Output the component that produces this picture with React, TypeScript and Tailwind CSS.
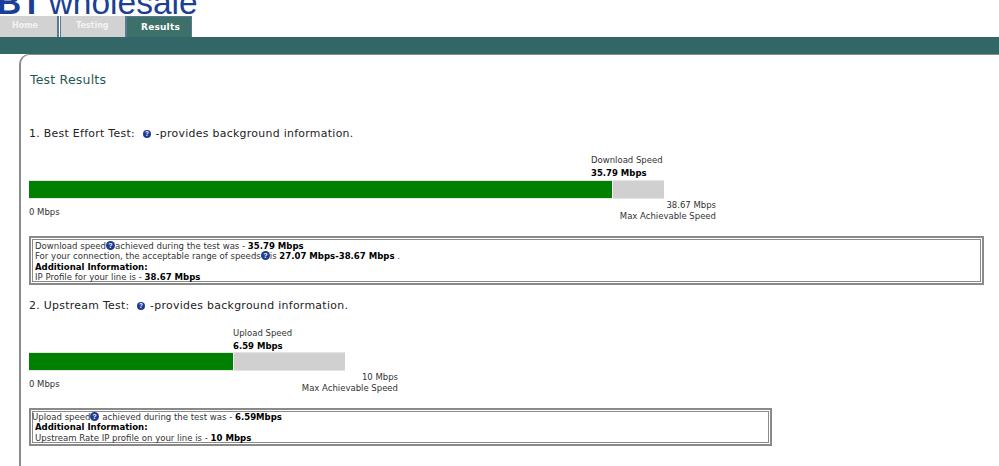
import React from "react";

const mono = "font-['DejaVu_Sans',sans-serif]";

function Help({ size = 9 }: { size?: number }) {
  return (
    <svg width={size} height={size} viewBox="0 0 10 10" className="inline-block align-[-1px]">
      <circle cx="5" cy="5" r="5" fill="#1f3a93" />
      <text x="5" y="8" textAnchor="middle" fontSize="8" fontWeight="700" fill="#fff" fontFamily="Liberation Sans, sans-serif">?</text>
    </svg>
  );
}

function Heading({ children }: { children: React.ReactNode }) {
  return (
    <div className="text-[10.9px] leading-[14px] tracking-[0.3px] text-[#222]">
      {children} <span className="ml-[4px]"><Help size={8} /></span> <span className="ml-px">-provides background information.</span>
    </div>
  );
}

function Meter({ labelLeft, label, value, fill, track, max, maxRight, barGap }: { labelLeft: number; label: string; value: string; fill: number; track: number; max: string; maxRight: number; barGap: number }) {
  return (
    <div className="text-[8.5px] text-[#333]">
      <div style={{ marginLeft: labelLeft, marginBottom: barGap }} className="leading-[12px]">
        <div>{label}</div>
        <div className="mt-px font-bold text-black">{value}</div>
      </div>
      <div className="flex h-[19px] border-y border-[#e4e4e4]" style={{ width: track }}>
        <div className="bg-[#008000]" style={{ width: fill }} />
        <div className="ml-px flex-1 bg-[#d0d0d0]" />
      </div>
      <div className="relative h-[28px]" style={{ width: maxRight }}>
        <div className="absolute left-0 top-[8px] leading-[11px]">0 Mbps</div>
        <div className="absolute right-0 top-px text-right leading-[10.5px]">
          <div>{max}</div>
          <div>Max Achievable Speed</div>
        </div>
      </div>
    </div>
  );
}

export default function App() {
  return (
    <div className={`h-[466px] w-[999px] overflow-hidden bg-white ${mono}`}>
      <div className="h-4 overflow-hidden">
        <div className="-mt-[17px] -ml-[3px] flex items-baseline whitespace-nowrap font-['Liberation_Sans',sans-serif] text-[33.5px] leading-[40px] text-[#1b3f94]">
          <span className="font-bold">BT</span>
          <span className="ml-[7px]">wholesale</span>
        </div>
      </div>

      <div className="flex h-[21px] items-stretch font-bold">
        <div className="w-[59px] border-r-2 border-[#5a7a94] bg-[#d2d2d2] pt-[4px] pl-[12px] text-[8px] text-[#f2f2f2]">Home</div>
        <div className="ml-px w-[66px] border-x border-[#5a7a94] bg-[#d2d2d2] pt-[4px] pl-[15px] text-[8px] text-[#f2f2f2]">Testing</div>
        <div className="w-[66px] border-x border-t border-[#5a7a94] bg-[#3c7068] pt-[4px] pl-[14px] text-[9px] tracking-[0.2px] text-white">Results</div>
      </div>

      <div className="h-[17px] bg-[#336666]" />

      <div className="ml-[19px] h-[412px] rounded-tl-[10px] border-t border-l-2 border-[#8c8c8c] pl-[8px]">
        <div className="pt-[17px] pl-px text-[12.5px] leading-[16px] tracking-[0.2px] text-[#1f5a55]">Test Results</div>

        <div className="mt-[39px]">
          <Heading>1. Best Effort Test:</Heading>
        </div>

        <div className="mt-[13px]">
          <Meter labelLeft={562} label="Download Speed" value="35.79 Mbps" fill={583} track={635} max="38.67 Mbps" maxRight={687} barGap={1} />
        </div>

        <div className="mt-[9px] h-[49px] w-[955px] border-2 border-[#8a8a8a] p-px">
          <div className="h-full border border-[#8a8a8a] pt-px pl-[2px] text-[8.55px] leading-[10.3px] text-[#333]">
            <div>Download speed<Help />achieved during the test was - <b className="text-black">35.79 Mbps</b></div>
            <div>For your connection, the acceptable range of speeds<Help />is <b className="text-black">27.07 Mbps-38.67 Mbps</b> .</div>
            <div className="font-bold text-black">Additional Information:</div>
            <div>IP Profile for your line is - <b className="text-black">38.67 Mbps</b></div>
          </div>
        </div>

        <div className="mt-[14px]">
          <Heading>2. Upstream Test:</Heading>
        </div>

        <div className="mt-[14px]">
          <Meter labelLeft={204} label="Upload Speed" value="6.59 Mbps" fill={204} track={316} max="10 Mbps" maxRight={369} barGap={0} />
        </div>

        <div className="mt-[9px] h-[38px] w-[743px] border-2 border-[#8a8a8a] p-px">
          <div className="h-full border border-[#8a8a8a] text-[8.55px] leading-[10.3px] text-[#333]">
            <div className="-ml-px">Upload speed<Help /> achieved during the test was - <b className="text-black">6.59Mbps</b></div>
            <div className="pl-[2px] font-bold text-black">Additional Information:</div>
            <div className="pl-[2px]">Upstream Rate IP profile on your line is - <b className="text-black">10 Mbps</b></div>
          </div>
        </div>
      </div>
    </div>
  );
}
